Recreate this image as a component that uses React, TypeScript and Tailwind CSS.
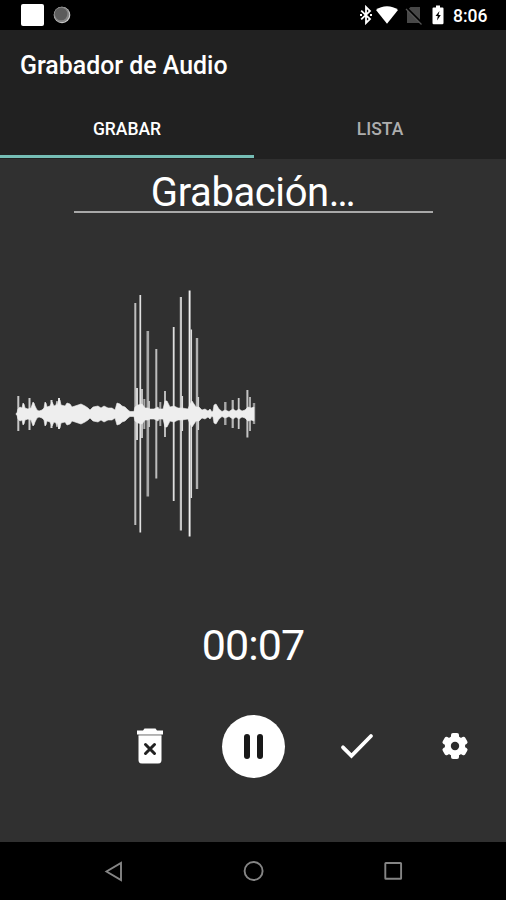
type Spike = { x: number; top: number; bottom: number; width: number; color: string };

const CENTER = 414;

// [x, half height] of the loud part of the signal
const ENVELOPE: [number, number][] = [
    [16, 0.5], [17, 1], [18, 5], [20, 7], [22, 6], [23, 11], [24, 10], [25, 6], [28, 5], [31, 6], [33, 12], [34, 11], [35, 8], [37, 4], [39, 3],
    [42, 4], [44, 6], [45, 12], [46, 11], [47, 7], [50, 8], [52, 12], [54, 8], [56, 9], [57, 13], [58, 9], [59, 14], [60, 14], [61, 9], [65, 8],
    [67, 11], [70, 10], [72, 7], [75, 8], [78, 9], [81, 10], [85, 8], [88, 6], [90, 4], [93, 7], [98, 8], [101, 6],
    [104, 8], [108, 6], [112, 6], [115, 4], [117, 11], [120, 10], [122, 8], [125, 7], [128, 4], [130, 2.5],
    [134, 2.5], [135, 7], [138, 9], [142, 10], [145, 6], [148, 6], [150, 5], [154, 5], [158, 7], [159, 5],
    [163, 5], [165, 13], [167, 13], [170, 7], [174, 8], [178, 6], [182, 6], [188, 5], [190, 10], [192, 13], [194, 10],
    [196, 7], [199, 7], [202, 4], [205, 5], [208, 3], [210, 5], [212, 2], [213, 3], [214, 9], [216, 10], [219, 5],
    [222, 2.5], [225, 4], [229, 2.5], [233, 5], [236, 3], [239, 5], [242, 3], [245, 4], [248, 7], [251, 6], [254, 7],
];

const SPIKES: Spike[] = [
    { x: 18.3, top: 396, bottom: 431, width: 2, color: "#c6c6c6" },
    { x: 29.5, top: 398, bottom: 430, width: 2, color: "#cfcfcf" },
    { x: 51.5, top: 400, bottom: 428, width: 2, color: "#dcdcdc" },
    { x: 59, top: 398, bottom: 429, width: 2, color: "#e4e4e4" },
    { x: 135.3, top: 303, bottom: 525, width: 2, color: "#bdbdbd" },
    { x: 137, top: 388, bottom: 440, width: 2, color: "#d4d4d4" },
    { x: 140.3, top: 295, bottom: 532.5, width: 1.7, color: "#e0e0e0" },
    { x: 142, top: 389, bottom: 438, width: 2, color: "#c0c0c0" },
    { x: 144.3, top: 399, bottom: 429, width: 2, color: "#aaaaaa" },
    { x: 147.8, top: 331, bottom: 496.5, width: 2.6, color: "#a8a8a8" },
    { x: 149, top: 401, bottom: 427, width: 2, color: "#bdbdbd" },
    { x: 156.3, top: 349, bottom: 478.5, width: 2, color: "#bdbdbd" },
    { x: 160.3, top: 402, bottom: 426, width: 2, color: "#a8a8a8" },
    { x: 165, top: 391, bottom: 437, width: 1.8, color: "#cacaca" },
    { x: 173.7, top: 327, bottom: 501, width: 1.8, color: "#dedede" },
    { x: 180.9, top: 297, bottom: 530.5, width: 2.2, color: "#c4c4c4" },
    { x: 182.3, top: 396, bottom: 431, width: 1.5, color: "#dddddd" },
    { x: 189.6, top: 290.5, bottom: 536.5, width: 1.9, color: "#eeeeee" },
    { x: 191.3, top: 329.5, bottom: 498, width: 1.5, color: "#dddddd" },
    { x: 197, top: 338, bottom: 489, width: 2.4, color: "#b0b0b0" },
    { x: 198.3, top: 397, bottom: 430, width: 1.6, color: "#cfcfcf" },
    { x: 225.3, top: 402, bottom: 425, width: 2.4, color: "#a8a8a8" },
    { x: 232.7, top: 400, bottom: 428, width: 2.2, color: "#b8b8b8" },
    { x: 238.7, top: 398, bottom: 429, width: 1.8, color: "#cacaca" },
    { x: 247.4, top: 390, bottom: 437.5, width: 2, color: "#c4c4c4" },
    { x: 250, top: 397, bottom: 431, width: 2, color: "#acacac" },
    { x: 254, top: 403, bottom: 424, width: 2.4, color: "#9a9a9a" },
];

function Waveform() {
    const upper = ENVELOPE.map(([x, h]) => `${x},${CENTER - h}`);
    const lower = [...ENVELOPE].reverse().map(([x, h]) => `${x},${CENTER + h}`);

    return (
        <svg className="block h-[260px] w-full" viewBox="0 284 506 260">
            {SPIKES.map((s) => (
                <rect key={s.x} x={s.x - s.width / 2} y={s.top} width={s.width} height={s.bottom - s.top} fill={s.color} />
            ))}
            <polygon points={[...upper, ...lower].join(" ")} fill="#eeeeee" stroke="#eeeeee" strokeWidth=".6" />
        </svg>
    );
}

function StatusBar() {
    return (
        <div className="flex h-[30px] shrink-0 items-center bg-black text-white">
            <div className="ml-[21px] h-[22px] w-[23px] rounded-[2px] bg-white" />
            <svg className="ml-[9px] h-[18px] w-[18px]" viewBox="0 0 18 18">
                <circle cx="9" cy="9" r="8.3" fill="#d0d0d0" />
                <circle cx="8.6" cy="8.5" r="7.7" fill="#858585" />
                <circle cx="8.1" cy="8" r="6.3" fill="#5c5c5c" />
            </svg>
            <svg className="mr-px ml-auto h-[20px] w-[12px]" viewBox="0 0 12 20" fill="none" stroke="white" strokeWidth="1.8">
                <path d="M1.2 5.6 10 14 6 18V2l4 4-8.8 8.4" />
                <path d="M0 10h2M10 10h2" />
            </svg>
            <svg className="ml-[3px] h-[18px] w-[22px]" viewBox="0 0 22 18" fill="white">
                <path d="M0 4C6-.9 16-.9 22 4L11 17.7z" />
            </svg>
            <svg className="ml-[7px] h-[20px] w-[18px]" viewBox="0 0 18 20">
                <path d="M5.5 2H15v16H2V5.5z" fill="#484848" />
                <path d="M1 2.3 17 18.3" stroke="black" strokeWidth="2.2" />
                <path d="M1 4 16.5 19.5" stroke="#555" strokeWidth="1.3" />
            </svg>
            <svg className="ml-[9px] h-[20px] w-[12px]" viewBox="0 0 12 20">
                <path d="M4 .5h4v2h2.5q1 0 1 1V18q0 1.3-1.2 1.3H1.7Q.5 19.3.5 18V3.5q0-1 1-1H4z" fill="white" />
                <path d="M7.5 6 3.5 11h2.3L5 15.5 8.8 10H6.5z" fill="black" />
            </svg>
            <span className="mr-[19px] ml-[9px] w-[34px] pt-[2px] text-[17.5px] leading-[28px] font-medium whitespace-nowrap">8:06</span>
        </div>
    );
}

function TrashIcon() {
    return (
        <svg className="h-[38px] w-[30px]" viewBox="0 0 30 38">
            <path d="M9.5 1.5h11l1.5 2h6v4H2v-4h6z" fill="white" />
            <path d="M3.5 7.3h23v2h-23z" fill="#bbb" />
            <path d="M3.5 9h23v24q0 3.5-3.5 3.5H7q-3.5 0-3.5-3.5z" fill="white" />
            <path d="m10.5 17.5 9 9m0-9-9 9" stroke="#222" strokeWidth="3" strokeLinecap="round" />
        </svg>
    );
}

function GearIcon() {
    return (
        <svg className="h-[32px] w-[32px]" viewBox="-16 -16 32 32" fill="white">
            <circle r="10.2" />
            <rect x="-4" y="-13" width="8" height="26" rx="2" />
            <rect x="-4" y="-13" width="8" height="26" rx="2" transform="rotate(60)" />
            <rect x="-4" y="-13" width="8" height="26" rx="2" transform="rotate(120)" />
            <circle r="4.2" fill="#2b2b2b" />
        </svg>
    );
}

function Controls() {
    return (
        <div className="mt-[45px] flex h-[64px] items-center">
            <button className="ml-[135px]">
                <TrashIcon />
            </button>
            <button className="ml-[57px] flex h-[63px] w-[63px] items-center justify-center gap-[7px] rounded-full bg-white">
                <span className="h-[25px] w-[6px] rounded-full bg-[#181818]" />
                <span className="h-[25px] w-[6px] rounded-full bg-[#181818]" />
            </button>
            <button className="ml-[55px]">
                <svg className="h-[28px] w-[34px]" viewBox="0 0 34 28" fill="none" stroke="white" strokeWidth="3.8">
                    <path d="m3 15.3 8.5 8.5L31 4" strokeLinecap="round" />
                </svg>
            </button>
            <button className="ml-[65px]">
                <GearIcon />
            </button>
        </div>
    );
}

function NavigationBar() {
    return (
        <div className="h-[58px] shrink-0 bg-black">
            <svg className="block h-[58px] w-full" viewBox="0 842 506 58" fill="none" stroke="#858585" strokeWidth="1.9">
                <path d="M121 863v17l-14.5-8.5z" />
                <circle cx="253.6" cy="871" r="9" />
                <rect x="385.3" y="863" width="15.8" height="15.8" rx=".6" />
            </svg>
        </div>
    );
}

export default function App() {
    return (
        <div className="flex h-[900px] w-[506px] flex-col overflow-hidden bg-[#303030] font-['Roboto',sans-serif] text-white">
            <StatusBar />
            <header className="h-[129px] shrink-0 bg-[#212121]">
                <h1 className="h-[70px] pl-[20px] text-[24.9px] leading-[72px] font-medium whitespace-nowrap">Grabador de Audio</h1>
                <div className="flex h-[58px] text-center text-[17.5px] leading-[59px] font-medium">
                    <div className="h-full w-[254px] border-b-[3px] border-[#75bdb5]">GRABAR</div>
                    <div className="w-[252px] text-[#adadad]">LISTA</div>
                </div>
            </header>
            <main className="flex-1">
                <div className="mx-auto h-[54px] w-[359px] border-b-2 border-[#a8a8a8] text-center text-[40px] leading-[67px] tracking-[-0.4px] whitespace-nowrap">
                    Grabación…
                </div>
                <div className="mt-[71px]">
                    <Waveform />
                </div>
                <div className="mt-[77px] h-[48px] text-center text-[43px] leading-[48px] tracking-[-0.9px]">00:07</div>
                <Controls />
            </main>
            <NavigationBar />
        </div>
    );
}
